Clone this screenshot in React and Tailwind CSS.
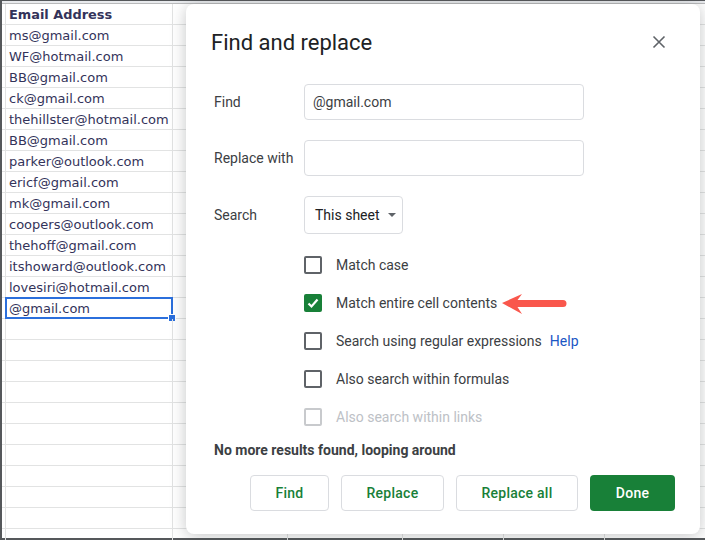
import React from 'react';

const emails = [
  'ms@gmail.com',
  'WF@hotmail.com',
  'BB@gmail.com',
  'ck@gmail.com',
  'thehillster@hotmail.com',
  'BB@gmail.com',
  'parker@outlook.com',
  'ericf@gmail.com',
  'mk@gmail.com',
  'coopers@outlook.com',
  'thehoff@gmail.com',
  'itshoward@outlook.com',
  'lovesiri@hotmail.com',
];

const SheetRow = ({ children, bold, selected }) => (
  <div className="flex h-[21px] shrink-0 border-b border-[#e2e3e3]">
    <div className="w-[4px] shrink-0 border-r border-[#e2e3e3]" />
    <div className="relative flex w-[167px] shrink-0 items-center border-r border-[#e2e3e3] pt-px pl-[3px]">
      <span className={`font-['DejaVu_Sans',sans-serif] text-[#33335a] ${bold ? 'text-[12.9px] font-bold' : 'text-[13px]'}`}>{children}</span>
      {selected && (
        <>
          <div className="absolute -top-px -left-px -right-px -bottom-px border-2 border-[#2b6fdc]" />
          <div className="absolute -right-[4px] -bottom-[4px] h-[8px] w-[8px] border border-white bg-[#2b6fdc]" />
        </>
      )}
    </div>
    <div className="w-[115px] shrink-0 border-r border-[#e2e3e3]" />
    <div className="w-[115px] shrink-0 border-r border-[#e2e3e3]" />
    <div className="w-[101px] shrink-0 border-r border-[#e2e3e3]" />
    <div className="w-[101px] shrink-0 border-r border-[#e2e3e3]" />
    <div className="flex-1" />
  </div>
);

const Check = ({ checked, disabled, children }) => (
  <div className={`flex h-[38px] items-center gap-[14px] text-sm ${disabled ? 'text-[#bdc1c6]' : 'text-[#3c4043]'}`}>
    {checked ? (
      <div className="flex h-[18px] w-[18px] items-center justify-center rounded-[2px] bg-[#188038]">
        <svg width="14" height="14" viewBox="0 0 14 14" fill="none" stroke="white" strokeWidth="2.2">
          <path d="M2.5 7.5 L5.5 10.5 L11.5 3.5" />
        </svg>
      </div>
    ) : (
      <div className={`h-[18px] w-[18px] rounded-[2px] border-2 ${disabled ? 'border-[#c8cacd]' : 'border-[#5f6368]'}`} />
    )}
    {children}
  </div>
);

const FormRow = ({ label, children }) => (
  <div className="flex h-[36px] items-center">
    <div className="w-[90px] text-sm text-[#3c4043]">{label}</div>
    {children}
  </div>
);

const OutlineButton = ({ width, children }) => (
  <button className={`h-[36px] rounded border border-[#dadce0] bg-white text-sm font-medium tracking-[0.25px] text-[#188038] ${width}`}>
    {children}
  </button>
);

export default function App() {
  return (
    <div className="relative h-[540px] w-[705px] overflow-hidden bg-white font-['Roboto',sans-serif]">
      {/* Sheet behind the dialog */}
      <div className="flex h-full flex-col border-t border-b-2 border-l-2 border-[#55585b]">
        <div className="h-[3px] shrink-0 border-b border-[#b9babb] bg-[#e8eaed]" />
        <div className="flex flex-col">
          <SheetRow bold>Email Address</SheetRow>
          {emails.map((email, i) => (
            <SheetRow key={i}>{email}</SheetRow>
          ))}
          <SheetRow selected>@gmail.com</SheetRow>
          {Array.from({ length: 11 }).map((_, i) => (
            <SheetRow key={i} />
          ))}
        </div>
      </div>

      {/* Dialog */}
      <div className="absolute top-[4px] left-[186px] flex h-[530px] w-[514px] flex-col rounded-lg bg-white pt-[24px] pr-[25px] pl-[28px] shadow-[0_2px_16px_rgba(60,64,67,0.3)]">
        <div className="flex h-[28px] items-center justify-between">
          <h1 className="-ml-[3px] text-[22px] text-[#202124]">Find and replace</h1>
          <svg className="mr-[9px]" width="14" height="14" viewBox="0 0 14 14" fill="none" stroke="#5f6368" strokeWidth="1.6">
            <path d="M1.5 1.5 L12.5 12.5 M12.5 1.5 L1.5 12.5" />
          </svg>
        </div>

        <div className="mt-[28px] flex flex-col gap-[20px]">
          <FormRow label="Find">
            <div className="flex h-[36px] w-[280px] items-center rounded border border-[#dadce0] pl-2 text-sm text-[#3c4043]">@gmail.com</div>
          </FormRow>
          <FormRow label="Replace with">
            <div className="h-[36px] w-[280px] rounded border border-[#dadce0]" />
          </FormRow>
          <div className="flex h-[38px] items-center">
            <div className="w-[90px] text-sm text-[#3c4043]">Search</div>
            <div className="flex h-[38px] w-[99px] items-center rounded border border-[#dadce0] pl-2.5 text-sm text-[#202124]">
              This sheet
              <div className="ml-[8px] h-0 w-0 border-x-[4px] border-t-[4px] border-x-transparent border-t-[#5f6368]" />
            </div>
          </div>
        </div>

        <div className="mt-[12px] ml-[90px] flex flex-col">
          <Check>Match case</Check>
          <Check checked>
            <span>Match entire cell contents</span>
          </Check>
          <Check>
            <span>Search using regular expressions</span>
            <span className="-ml-[6px] text-[#1a56c4]">Help</span>
          </Check>
          <Check>Also search within formulas</Check>
          <Check disabled>Also search within links</Check>
        </div>

        <p className="mt-[4px] text-sm font-bold text-[#3c4043]">No more results found, looping around</p>

        <div className="mt-[15px] flex justify-end gap-[12px]">
          <OutlineButton width="w-[79px]">Find</OutlineButton>
          <OutlineButton width="w-[103px]">Replace</OutlineButton>
          <OutlineButton width="w-[122px]">Replace all</OutlineButton>
          <button className="h-[36px] w-[85px] rounded bg-[#188038] text-sm font-medium tracking-[0.25px] text-white">Done</button>
        </div>

        {/* Red annotation arrow */}
        <svg className="absolute top-[288px] left-[315px]" width="66" height="22" viewBox="0 0 66 22">
          <path d="M1 11 L21 2 L16.5 8 L62 8 A3.5 3.5 0 0 1 62 15 L16.5 15 L21 22 Z" fill="#f9574c" />
        </svg>
      </div>
    </div>
  );
}
